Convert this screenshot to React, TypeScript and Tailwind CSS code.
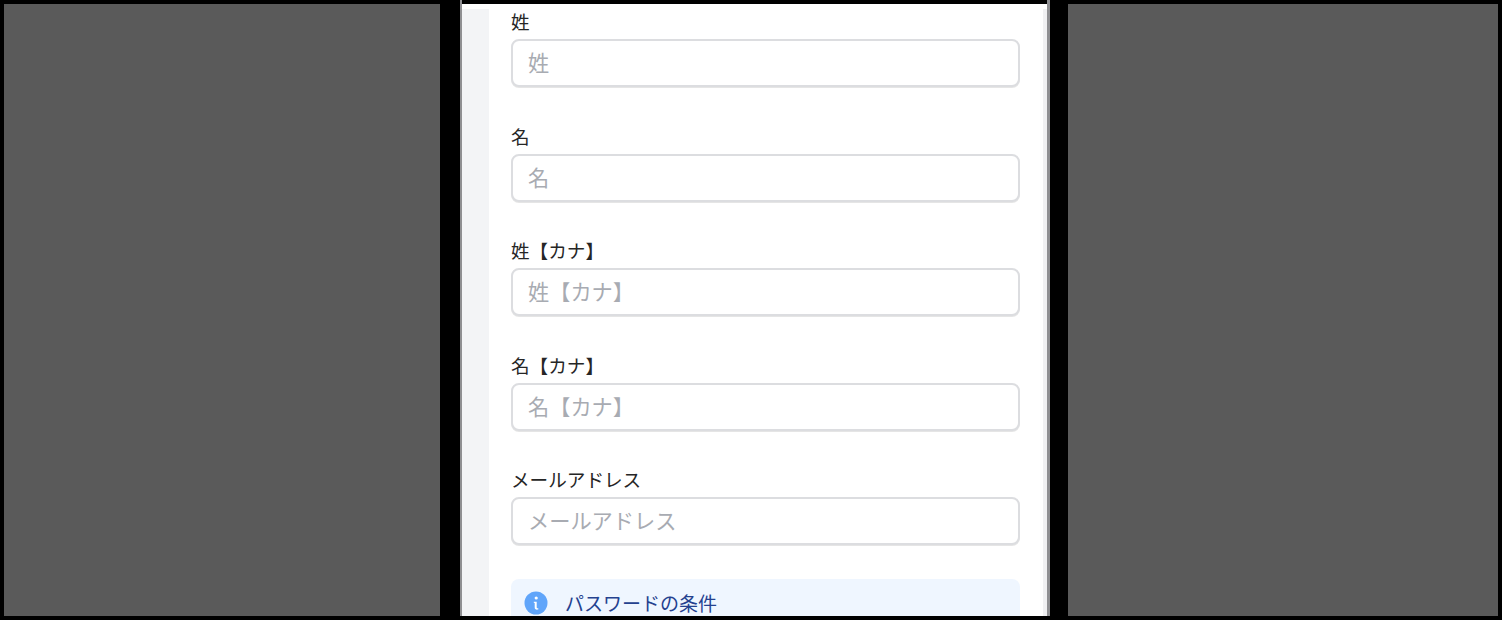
const fields = ['姓', '名', '姓【カナ】', '名【カナ】', 'メールアドレス'];

const InfoIcon = () => (
  <svg viewBox="0 0 24 24" className="w-[24px] h-[24px] shrink-0">
    <circle cx="12" cy="12" r="11.5" fill="#60a5fa" />
    <circle cx="12.2" cy="7" r="1.6" fill="#fff" />
    <path d="M9.8 10.8h2.9v5.4c0 .9.4 1.2 1.6 1.1v1.2c-2.3.5-3.6-.2-3.6-2v-4.6l-.9-.1z" fill="#fff" />
  </svg>
);

const Field = ({ name }: { name: string }) => (
  <div>
    <label className="block h-[27px] leading-[24px] text-[18.6px] text-[#262626]">{name}</label>
    <input
      type="text"
      placeholder={name}
      className="mt-[3px] block w-full h-[48px] mb-[1px] rounded-[8px] border-2 border-[#dcdde0] bg-white px-[15px] pb-[3px] text-[21.2px] shadow-[0_1px_0_rgba(0,0,0,0.1)] placeholder:text-[#a8abb2] outline-none"
    />
  </div>
);

export default function App() {
  return (
    <div className="h-[620px] w-[1502px] overflow-hidden bg-black p-[4px] font-['Noto_Sans_CJK_JP','Noto_Sans_CJK_SC',sans-serif]">
      <div className="flex h-[612px]">
        <div className="w-[436px] bg-[#5a5a5a]" />
        <div className="ml-[20px] -mt-[4px] w-[590px] border-x-[3px] border-x-[#8f8f92] border-l-[2px] bg-black pt-[4px]">
          <div className="flex h-[612px] overflow-hidden bg-white">
            <div className="mt-[5px] w-[27px] bg-[#f3f4f6]" />
            <div className="flex-1 pl-[22px] pr-[23px] pt-[5px]">
              <div className="flex flex-col gap-[35.5px]">
                {fields.map((f) => (
                  <Field key={f} name={f} />
                ))}
              </div>
              <div className="mt-[33px] flex h-[60px] items-start rounded-[8px] bg-[#eff6ff] pl-[13px] pt-[12px]">
                <InfoIcon />
                <span className="ml-[17px] text-[19px] leading-[23px] text-[#24418f]">パスワードの条件</span>
              </div>
            </div>
            <div className="mt-[5px] w-[4px] bg-[#f0f0f2]" />
          </div>
        </div>
        <div className="ml-[18px] flex-1 bg-[#5a5a5a]" />
      </div>
    </div>
  );
}
